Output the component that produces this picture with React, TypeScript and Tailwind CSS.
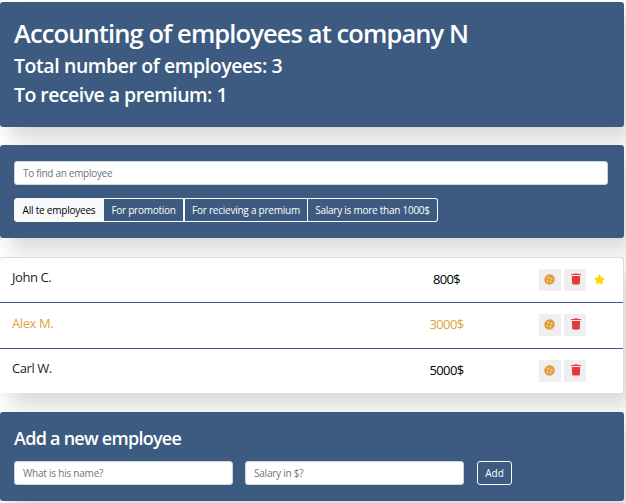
import { FaStar } from "react-icons/fa";

const panel = "w-[624px] rounded-[3px] bg-[#3d5a80] px-[14px] text-white shadow-[10px_13px_20px_rgba(0,0,0,0.15)]";
const field =
  "h-6 rounded-[3px] border border-[#ced4da] bg-white px-2 text-[10px] text-[#212529] outline-none placeholder:text-[#6c757d] placeholder:opacity-100";

const filters = [
  { label: "All te employees", style: "w-[90px] bg-[#f8f9fa] text-black rounded-l-[3px] tracking-[-0.22px]" },
  { label: "For promotion", style: "w-[80px] border-l-0 tracking-[-0.26px]" },
  { label: "For recieving a premium", style: "w-[124px] tracking-[-0.24px]" },
  { label: "Salary is more than 1000$", style: "w-[130px] border-l-0 rounded-r-[3px] tracking-[-0.25px]" },
];

const employees = [
  { name: "John C.", salary: 800, increase: false, rise: true, height: "h-[45px]", shift: "-mt-px" },
  { name: "Alex M.", salary: 3000, increase: true, rise: false, height: "h-[46px]", shift: "" },
  { name: "Carl W.", salary: 5000, increase: false, rise: false, height: "h-[44px]", shift: "-mt-px" },
];

function CookieIcon() {
  return (
    <svg viewBox="0 0 11 11" className="size-[11px]">
      <path
        fill="#e09f3e"
        d="M4 .5 5.5.2 7.4.4 9.1 1.5 10.4 3.2 10.7 5.2 10.3 7.4 9.2 9.2 7.4 10.3 5.4 10.7 3.4 10.3 1.6 9.1.5 7.3.3 5.3.7 3.4 1.9 1.7Z"
      />
      <circle cx="4.2" cy="3.6" r=".8" fill="#f7e5ca" />
      <circle cx="7.6" cy="4.6" r=".8" fill="#f7e5ca" />
      <circle cx="3.6" cy="7" r=".8" fill="#f7e5ca" />
      <circle cx="6.7" cy="7.5" r=".8" fill="#f7e5ca" />
    </svg>
  );
}

function TrashIcon() {
  return (
    <svg viewBox="0 0 10 12" className="h-3 w-[10px]" fill="#e5383b">
      <path d="M3.2.4h3.6l.4.6h2.4q.3 0 .3.3v.7H.1v-.7Q.1 1 .4 1h2.4z" />
      <path d="M.8 2.9h8.4l-.4 7.6q-.1 1-1 1H2.2q-.9 0-1-1z" />
    </svg>
  );
}

function Header() {
  return (
    <header className={`${panel} h-[125px] pt-[15px] font-semibold`}>
      <h1 className="h-[34px] whitespace-nowrap text-[25.5px] leading-[33px] tracking-[-0.9px]">
        Accounting of employees at company N
      </h1>
      <h2 className="h-[29px] whitespace-nowrap text-[19.5px] leading-[29px] tracking-[-0.42px]">
        Total number of employees: 3
      </h2>
      <h2 className="h-[29px] whitespace-nowrap text-[19.5px] leading-[29px] tracking-[-0.54px]">
        To receive a premium: 1
      </h2>
    </header>
  );
}

function Search() {
  return (
    <section className={`${panel} mt-[18px] h-[93px] pt-4`}>
      <input className={`${field} block w-[594px] tracking-[-0.3px]`} placeholder="To find an employee" />
      <div className="mt-[13px] flex text-[10px]">
        {filters.map((f) => (
          <button
            key={f.label}
            className={`h-6 whitespace-nowrap border border-[#f8f9fa] text-center leading-[22px] ${f.style}`}
          >
            {f.label}
          </button>
        ))}
      </div>
    </section>
  );
}

function List() {
  return (
    <ul className="mt-[19px] w-[624px] rounded-[3px] border border-[#d8d9da] border-b-0 border-l-0 bg-white shadow-[10px_13px_20px_rgba(0,0,0,0.15)]">
      {employees.map((e, i) => (
        <li
          key={e.name}
          className={`flex pl-3 pt-[11px] text-[13px] ${e.height} ${i < 2 ? "border-b border-[#3d5a80]" : ""} ${
            e.increase ? "text-[#e09f3e]" : "text-[#212529]"
          }`}
        >
          <span className={`w-[394px] leading-[18px] tracking-[-0.42px] ${e.shift}`}>{e.name}</span>
          <span
            className={`-mt-px w-20 pl-px text-center leading-[22px] tracking-[-0.65px] ${e.increase ? "" : "text-black"}`}
          >
            {e.salary}$
          </span>
          <div className="ml-[53px] flex gap-[3px]">
            <button className="flex size-[22px] items-start justify-start bg-[#efefef] pl-[5px] pt-[5px]">
              <CookieIcon />
            </button>
            <button className="flex size-[22px] items-start justify-start bg-[#efefef] pl-[7px] pt-1">
              <TrashIcon />
            </button>
            {e.rise && (
              <span className="flex size-[22px] items-start justify-start pl-[4.5px] pt-[5px]">
                <FaStar className="size-[11px] text-[#ffd700]" />
              </span>
            )}
          </div>
        </li>
      ))}
    </ul>
  );
}

function AddForm() {
  return (
    <section className={`${panel} mt-[19px] h-[89px] pt-3`}>
      <h3 className="h-[37px] whitespace-nowrap text-[18px] font-semibold leading-[29px] tracking-[-0.74px]">
        Add a new employee
      </h3>
      <form className="flex">
        <input className={`${field} w-[219px] tracking-[-0.22px]`} placeholder="What is his name?" />
        <input className={`${field} ml-3 w-[219px] tracking-[-0.22px]`} placeholder="Salary in $?" />
        <button
          type="button"
          className="ml-[13px] h-6 w-[35px] rounded-[3px] border border-[#f8f9fa] text-[10px] font-medium leading-[22px]"
        >
          Add
        </button>
      </form>
    </section>
  );
}

export default function App() {
  return (
    <main className="h-[503px] overflow-hidden bg-white pt-[2px] font-['Open_Sans','Noto_Sans',sans-serif]">
      <Header />
      <Search />
      <List />
      <AddForm />
    </main>
  );
}
